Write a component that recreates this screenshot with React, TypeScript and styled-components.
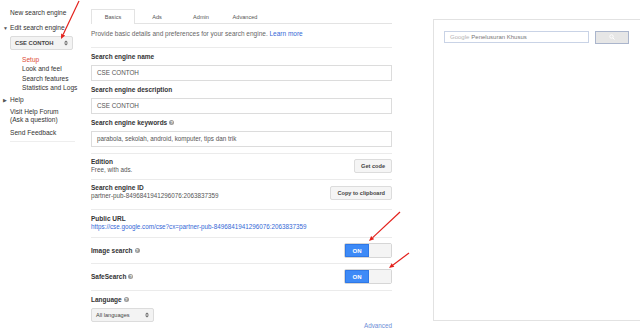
import React from 'react'
import styled, { createGlobalStyle } from 'styled-components'

const GlobalStyle = createGlobalStyle`
  html, body {
    margin: 0;
    padding: 0;
    background: #fff;
  }
  body {
    width: 640px;
    height: 328px;
    overflow: hidden;
    font-family: 'Liberation Sans', Arial, sans-serif;
    font-size: 6.5px;
    color: #444;
  }
`

const Page = styled.div`
  position: relative;
  display: flex;
  width: 640px;
  height: 328px;
`

const Sidebar = styled.nav`
  width: 90px;
  flex-shrink: 0;
  padding-top: 8px;
  box-sizing: border-box;
`

const NavLink = styled.div<{ $indent?: number; $active?: boolean; $h?: number }>`
  height: ${({ $h }) => $h ?? 9.5}px;
  line-height: ${({ $h }) => $h ?? 9.5}px;
  padding-left: ${({ $indent }) => $indent ?? 10}px;
  color: ${({ $active }) => ($active ? '#dd4b39' : '#333')};
  font-size: 6.6px;
  white-space: nowrap;
`

const NavGroup = styled.div`
  display: flex;
  align-items: center;
  height: 10px;
  line-height: 10px;
  font-size: 6.6px;
  color: #333;
  white-space: nowrap;
`

const Caret = styled.span`
  width: 10px;
  padding-left: 3px;
  box-sizing: border-box;
  font-size: 5px;
  color: #555;
`

const EngineSelect = styled.div`
  margin: 3px 0 5px 10px;
  width: 63px;
  height: 14px;
  box-sizing: border-box;
  border: 1px solid #dcdcdc;
  border-radius: 2px;
  background: #f3f3f3;
  display: flex;
  align-items: center;
  justify-content: space-between;
  padding: 0 4px 0 4px;
  font-weight: bold;
  font-size: 5.8px;
  color: #444;
`

const NavRule = styled.div`
  margin: 4px 0 0 10px;
  width: 65px;
  border-top: 1px solid #eee;
`

const Main = styled.main`
  width: 301px;
  flex-shrink: 0;
  margin-left: 1px;
  padding-top: 9px;
`

const TabBar = styled.div`
  display: flex;
  height: 14px;
  border-bottom: 1px solid #e3e3e3;
`

const Tab = styled.div<{ $active?: boolean }>`
  width: 44px;
  height: ${({ $active }) => ($active ? '15px' : '14px')};
  box-sizing: border-box;
  display: flex;
  align-items: center;
  justify-content: center;
  font-size: 5.6px;
  color: #555;
  background: #fff;
  border: 1px solid ${({ $active }) => ($active ? '#e3e3e3' : 'transparent')};
  border-bottom: none;
`

const Intro = styled.p`
  margin: 5px 0 0;
  line-height: 9px;
  font-size: 6.5px;
  color: #666;
`

const Link = styled.a`
  color: #3367d6;
  text-decoration: none;
`

const Fields = styled.div`
  margin-top: 9px;
  border-top: 1px solid #ebebeb;
  padding-top: 3.5px;
`

const Label = styled.div`
  display: flex;
  align-items: center;
  gap: 2px;
  line-height: 9px;
  height: 9px;
  margin-bottom: 4px;
  font-weight: bold;
  font-size: 6.5px;
  color: #333;
`

const Input = styled.div`
  height: 16px;
  box-sizing: border-box;
  border: 1px solid #dcdcdc;
  margin-bottom: 4px;
  display: flex;
  align-items: center;
  padding-left: 5px;
  font-size: 6.3px;
  color: #555;
`

const Row = styled.div<{ $h: number; $center?: boolean; $pad?: number }>`
  height: ${({ $h }) => $h}px;
  box-sizing: border-box;
  border-top: 1px solid #ebebeb;
  padding-top: ${({ $pad }) => $pad ?? 0}px;
  display: flex;
  justify-content: space-between;
  align-items: ${({ $center }) => ($center ? 'center' : 'flex-start')};
`

const FirstRow = styled(Row)`
  margin-top: 6px;
`

const InfoText = styled.div`
  line-height: 8px;
  font-size: 6.3px;
  color: #555;
`

const InfoTitle = styled.div`
  font-weight: bold;
  font-size: 6.5px;
  color: #333;
`

const Button = styled.div<{ $top: number }>`
  margin-top: ${({ $top }) => $top}px;
  height: 14px;
  box-sizing: border-box;
  padding: 0 6px;
  display: flex;
  align-items: center;
  border: 1px solid #dcdcdc;
  border-radius: 2px;
  background: #f5f5f5;
  font-weight: bold;
  font-size: 5.6px;
  color: #444;
`

const Toggle = styled.div`
  display: flex;
  width: 48px;
  height: 15px;
  box-sizing: border-box;
  border: 1px solid #d6d6d6;
  border-radius: 2px;
  overflow: hidden;
`

const ToggleOn = styled.div`
  width: 24px;
  background: #3d8af7;
  box-shadow: inset 0 0 0 1px #2f78e6;
  color: #fff;
  font-weight: bold;
  font-size: 6px;
  display: flex;
  align-items: center;
  justify-content: center;
`

const ToggleOff = styled.div`
  flex: 1;
  background: #f4f4f4;
`

const Help = styled.span`
  display: inline-flex;
  align-items: center;
  justify-content: center;
  width: 5px;
  height: 5px;
  border-radius: 50%;
  background: #9a9a9a;
  color: #fff;
  font-size: 4px;
  font-weight: bold;
  line-height: 5px;
`

const LangBlock = styled.div`
  border-top: 1px solid #ebebeb;
  padding-top: 5px;
`

const LangSelect = styled.div`
  margin-top: 4.5px;
  width: 63px;
  height: 14px;
  box-sizing: border-box;
  border: 1px solid #dcdcdc;
  border-radius: 2px;
  background: #f3f3f3;
  display: flex;
  align-items: center;
  justify-content: space-between;
  padding: 0 4px;
  font-size: 5.6px;
  color: #444;
`

const AdvancedLink = styled(Link)`
  display: block;
  text-align: right;
  line-height: 8px;
  font-size: 6.3px;
  color: #6c8ed6;
`

const Preview = styled.aside`
  flex: 1;
  margin: 19px 0 0 41px;
  height: 302px;
  border: 1px solid #e2e2e2;
  border-right: none;
  padding: 11px 0 0 10px;
  box-sizing: border-box;
  display: flex;
  align-items: flex-start;
  gap: 6px;
`

const SearchBox = styled.div`
  width: 145px;
  height: 12px;
  box-sizing: border-box;
  border: 1px solid #c9d3e6;
  display: flex;
  align-items: center;
  padding-left: 5px;
  font-size: 6px;
  color: #777;
`

const Watermark = styled.span`
  color: #b5b5b5;
  margin-right: 2px;
`

const SearchButton = styled.div`
  width: 34px;
  height: 13px;
  margin-top: -0.5px;
  box-sizing: border-box;
  border: 1px solid #aab5cc;
  background: #e6e6e6;
  display: flex;
  align-items: center;
  justify-content: center;
`

const Overlay = styled.svg`
  position: absolute;
  left: 0;
  top: 0;
  pointer-events: none;
`

const UpDown = () => (
  <svg width="4" height="6" viewBox="0 0 4 6">
    <path d="M0 2.4 L2 0.4 L4 2.4 Z M0 3.6 L2 5.6 L4 3.6 Z" fill="#666" />
  </svg>
)

const Arrow = ({ x1, y1, x2, y2 }: { x1: number; y1: number; x2: number; y2: number }) => {
  const a = Math.atan2(y2 - y1, x2 - x1)
  const len = 5
  const w = 2.2
  const bx = x2 - Math.cos(a) * len
  const by = y2 - Math.sin(a) * len
  const px = -Math.sin(a) * w
  const py = Math.cos(a) * w
  return (
    <g>
      <line x1={x1} y1={y1} x2={bx} y2={by} stroke="#e3211c" strokeWidth="1.2" />
      <polygon points={`${x2},${y2} ${bx + px},${by + py} ${bx - px},${by - py}`} fill="#e3211c" />
    </g>
  )
}

const App: React.FC = () => {
  return (
    <>
      <GlobalStyle />
      <Page>
        <Sidebar>
          <NavLink>New search engine</NavLink>
          <NavGroup style={{ marginTop: 5 }}>
            <Caret>▼</Caret>Edit search engine
          </NavGroup>
          <EngineSelect>
            CSE CONTOH
            <UpDown />
          </EngineSelect>
          <NavLink $indent={22} $active>Setup</NavLink>
          <NavLink $indent={22}>Look and feel</NavLink>
          <NavLink $indent={22}>Search features</NavLink>
          <NavLink $indent={22}>Statistics and Logs</NavLink>
          <NavGroup style={{ marginTop: 2 }}>
            <Caret>▶</Caret>Help
          </NavGroup>
          <NavLink $h={8} style={{ marginTop: 3 }}>Visit Help Forum</NavLink>
          <NavLink $h={8}>(Ask a question)</NavLink>
          <NavLink style={{ marginTop: 4 }}>Send Feedback</NavLink>
          <NavRule />
        </Sidebar>

        <Main>
          <TabBar>
            <Tab $active>Basics</Tab>
            <Tab>Ads</Tab>
            <Tab>Admin</Tab>
            <Tab>Advanced</Tab>
          </TabBar>
          <Intro>
            Provide basic details and preferences for your search engine. <Link>Learn more</Link>
          </Intro>

          <Fields>
            <Label>Search engine name</Label>
            <Input>CSE CONTOH</Input>
            <Label>Search engine description</Label>
            <Input>CSE CONTOH</Input>
            <Label>
              Search engine keywords <Help>?</Help>
            </Label>
            <Input>parabola, sekolah, android, komputer, tips dan trik</Input>
          </Fields>

          <FirstRow $h={26} $pad={4}>
            <InfoText>
              <InfoTitle>Edition</InfoTitle>
              Free, with ads.
            </InfoText>
            <Button $top={1.5}>Get code</Button>
          </FirstRow>
          <Row $h={30} $pad={4}>
            <InfoText>
              <InfoTitle>Search engine ID</InfoTitle>
              partner-pub-8496841941296076:2063837359
            </InfoText>
            <Button $top={2.5}>Copy to clipboard</Button>
          </Row>
          <Row $h={28.5} $pad={5}>
            <InfoText style={{ lineHeight: '8.5px' }}>
              <InfoTitle>Public URL</InfoTitle>
              <Link>https://cse.google.com/cse?cx=partner-pub-8496841941296076:2063837359</Link>
            </InfoText>
          </Row>
          <Row $h={26} $center>
            <Label style={{ margin: 0 }}>
              Image search <Help>?</Help>
            </Label>
            <Toggle>
              <ToggleOn>ON</ToggleOn>
              <ToggleOff />
            </Toggle>
          </Row>
          <Row $h={26.5} $center>
            <Label style={{ margin: 0 }}>
              SafeSearch <Help>?</Help>
            </Label>
            <Toggle>
              <ToggleOn>ON</ToggleOn>
              <ToggleOff />
            </Toggle>
          </Row>
          <LangBlock>
            <Label style={{ margin: 0, height: 8, lineHeight: '8px' }}>
              Language <Help>?</Help>
            </Label>
            <LangSelect>
              All languages
              <UpDown />
            </LangSelect>
            <AdvancedLink>Advanced</AdvancedLink>
          </LangBlock>
        </Main>

        <Preview>
          <SearchBox>
            <Watermark>Google</Watermark>Penelusuran Khusus
          </SearchBox>
          <SearchButton>
            <svg width="6" height="6" viewBox="0 0 12 12">
              <circle cx="5" cy="5" r="3.5" fill="none" stroke="#fff" strokeWidth="1.8" />
              <line x1="7.6" y1="7.6" x2="11" y2="11" stroke="#fff" strokeWidth="2" />
            </svg>
          </SearchButton>
        </Preview>

        <Overlay width="640" height="328">
          <Arrow x1={79} y1={1} x2={61} y2={39} />
          <Arrow x1={400} y1={212} x2={369} y2={241} />
          <Arrow x1={409} y1={253} x2={389} y2={268} />
        </Overlay>
      </Page>
    </>
  )
}

export default App
